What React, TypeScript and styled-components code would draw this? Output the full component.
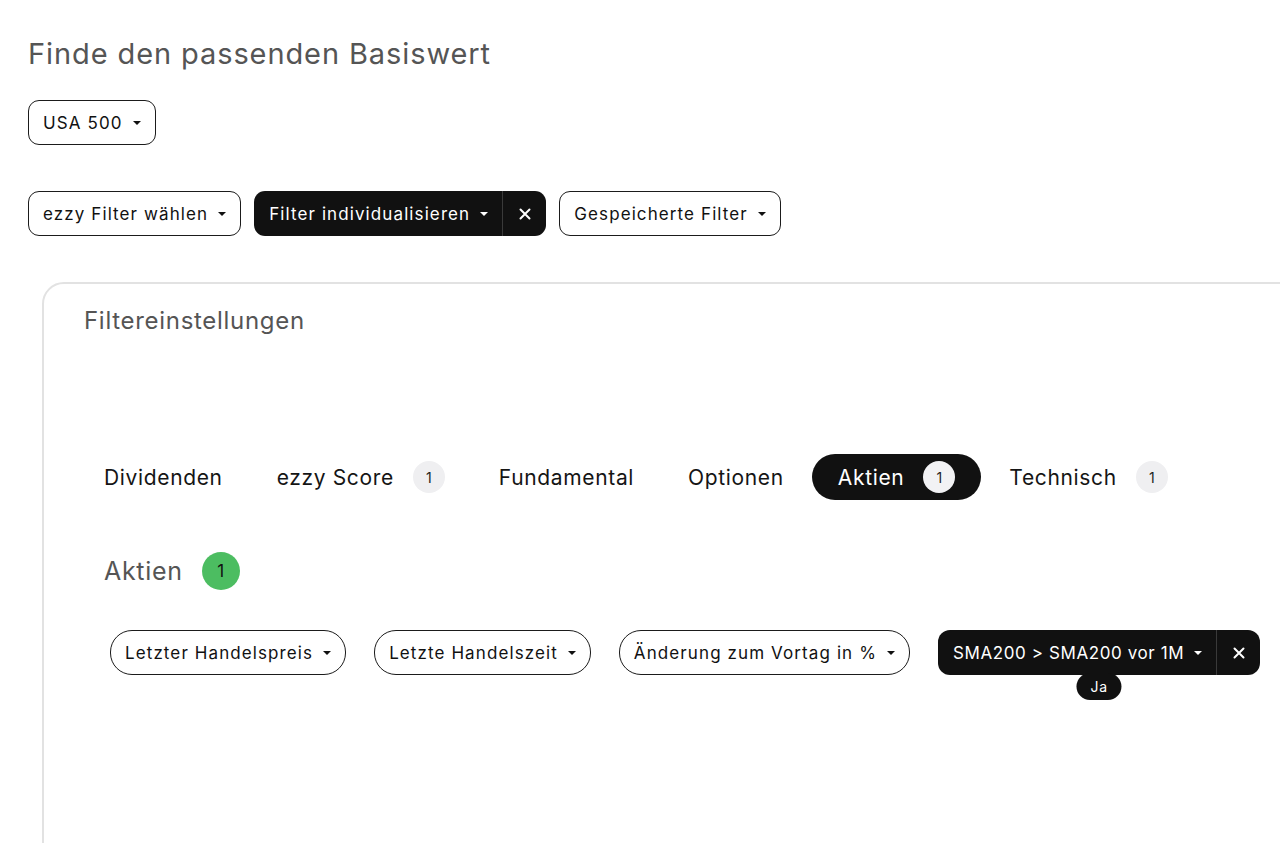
import React from "react";
import styled, { createGlobalStyle } from "styled-components";

const GlobalStyle = createGlobalStyle`
  html, body {
    margin: 0;
    padding: 0;
    background: #ffffff;
    overflow: hidden;
  }
  body {
    font-family: Inter, "Noto Sans", sans-serif;
    color: #111;
  }
`;

const Page = styled.main`
  padding: 34px 0 0 28px;
  display: flex;
  flex-direction: column;
  align-items: flex-start;
`;

const Title = styled.h1`
  margin: 0 0 26px;
  font-size: 29px;
  line-height: 40px;
  font-weight: 400;
  letter-spacing: 0.9px;
  color: #555;
`;

const ButtonRow = styled.div`
  display: flex;
  align-items: center;
  gap: 13px;
  margin-bottom: 46px;
`;

const Caret = styled.span`
  display: inline-block;
  width: 0;
  height: 0;
  border-left: 4.5px solid transparent;
  border-right: 4.5px solid transparent;
  border-top: 4.5px solid currentColor;
  margin-left: 10px;
`;

const DropButton = styled.button<{ $pill?: boolean }>`
  height: 45px;
  padding: 0 14px;
  display: inline-flex;
  align-items: center;
  border: 1.5px solid #1b1b1b;
  border-radius: ${(p) => (p.$pill ? "22px" : "11px")};
  background: #fff;
  color: #111;
  font-family: inherit;
  font-size: 17px;
  letter-spacing: 1.1px;
  white-space: nowrap;
  cursor: pointer;
`;

const SplitButton = styled.div<{ $pill?: boolean }>`
  position: relative;
  height: 45px;
  display: inline-flex;
  align-items: stretch;
  background: #111;
  color: #fff;
  border-radius: ${(p) => (p.$pill ? "12px" : "11px")};
  font-size: 17px;
  letter-spacing: ${(p) => (p.$pill ? "0.6px" : "1.1px")};
  white-space: nowrap;
`;

const SplitMain = styled.span`
  display: inline-flex;
  align-items: center;
  padding: 0 14px 0 15px;
`;

const SplitClose = styled.span`
  display: inline-flex;
  align-items: center;
  justify-content: center;
  width: 43px;
  border-left: 1px solid #3a3a3a;
`;

const Tooltip = styled.span`
  position: absolute;
  top: calc(100% - 2px);
  left: 50%;
  transform: translateX(-50%);
  height: 27px;
  padding: 0 14px;
  display: inline-flex;
  align-items: center;
  background: #111;
  color: #fff;
  border-radius: 14px;
  font-size: 14px;
  letter-spacing: 0.6px;
`;

const Panel = styled.section`
  margin-left: 14px;
  width: 1300px;
  min-height: 600px;
  border: 2px solid #e2e2e2;
  border-radius: 22px 0 0 0;
  padding: 22px 0 0 40px;
  box-sizing: border-box;
`;

const PanelTitle = styled.h2`
  margin: 0 0 118px;
  font-size: 24px;
  line-height: 30px;
  font-weight: 400;
  letter-spacing: 0.7px;
  color: #555;
`;

const Tabs = styled.div`
  display: flex;
  align-items: center;
  gap: 2px;
  margin-left: -6px;
  margin-bottom: 52px;
`;

const Tab = styled.div<{ $active?: boolean }>`
  height: 46px;
  padding: 0 26px;
  display: inline-flex;
  align-items: center;
  gap: 19px;
  border-radius: 23px;
  font-size: 21px;
  letter-spacing: 0.65px;
  background: ${(p) => (p.$active ? "#111" : "transparent")};
  color: ${(p) => (p.$active ? "#fff" : "#151515")};
`;

const Count = styled.span<{ $active?: boolean }>`
  width: 32px;
  height: 32px;
  border-radius: 50%;
  display: inline-flex;
  align-items: center;
  justify-content: center;
  font-size: 14px;
  letter-spacing: 0;
  background: ${(p) => (p.$active ? "#f2f2f4" : "#efeff1")};
  color: #222;
`;

const SectionHead = styled.div`
  display: flex;
  align-items: center;
  gap: 19px;
  margin-left: 20px;
  margin-bottom: 40px;
`;

const SectionTitle = styled.h3`
  margin: 0;
  font-size: 25px;
  font-weight: 400;
  letter-spacing: 0.7px;
  color: #555;
`;

const GreenCount = styled.span`
  width: 38px;
  height: 38px;
  border-radius: 50%;
  background: #4cbd61;
  color: #111;
  display: inline-flex;
  align-items: center;
  justify-content: center;
  font-size: 17px;
`;

const ChipRow = styled.div`
  display: flex;
  align-items: center;
  gap: 28px;
  margin-left: 26px;
`;

const CloseIcon = () => (
  <svg width="12" height="12" viewBox="0 0 12 12">
    <path d="M1.5 1.5 L10.5 10.5 M10.5 1.5 L1.5 10.5" stroke="#fff" strokeWidth="2" strokeLinecap="round" />
  </svg>
);

const tabs = [
  { label: "Dividenden" },
  { label: "ezzy Score", count: 1 },
  { label: "Fundamental" },
  { label: "Optionen" },
  { label: "Aktien", count: 1, active: true },
  { label: "Technisch", count: 1 },
];

const chips = ["Letzter Handelspreis", "Letzte Handelszeit", "Änderung zum Vortag in %"];

export default function App() {
  return (
    <>
      <GlobalStyle />
      <Page>
        <Title>Finde den passenden Basiswert</Title>
        <ButtonRow>
          <DropButton>
            USA 500
            <Caret />
          </DropButton>
        </ButtonRow>
        <ButtonRow>
          <DropButton>
            ezzy Filter wählen
            <Caret />
          </DropButton>
          <SplitButton>
            <SplitMain>
              Filter individualisieren
              <Caret />
            </SplitMain>
            <SplitClose>
              <CloseIcon />
            </SplitClose>
          </SplitButton>
          <DropButton>
            Gespeicherte Filter
            <Caret />
          </DropButton>
        </ButtonRow>
        <Panel>
          <PanelTitle>Filtereinstellungen</PanelTitle>
          <Tabs>
            {tabs.map((t) => (
              <Tab key={t.label} $active={t.active}>
                {t.label}
                {t.count && <Count $active={t.active}>{t.count}</Count>}
              </Tab>
            ))}
          </Tabs>
          <SectionHead>
            <SectionTitle>Aktien</SectionTitle>
            <GreenCount>1</GreenCount>
          </SectionHead>
          <ChipRow>
            {chips.map((c) => (
              <DropButton key={c} $pill>
                {c}
                <Caret />
              </DropButton>
            ))}
            <SplitButton $pill>
              <SplitMain>
                SMA200 &gt; SMA200 vor 1M
                <Caret />
              </SplitMain>
              <SplitClose>
                <CloseIcon />
              </SplitClose>
              <Tooltip>Ja</Tooltip>
            </SplitButton>
          </ChipRow>
        </Panel>
      </Page>
    </>
  );
}
